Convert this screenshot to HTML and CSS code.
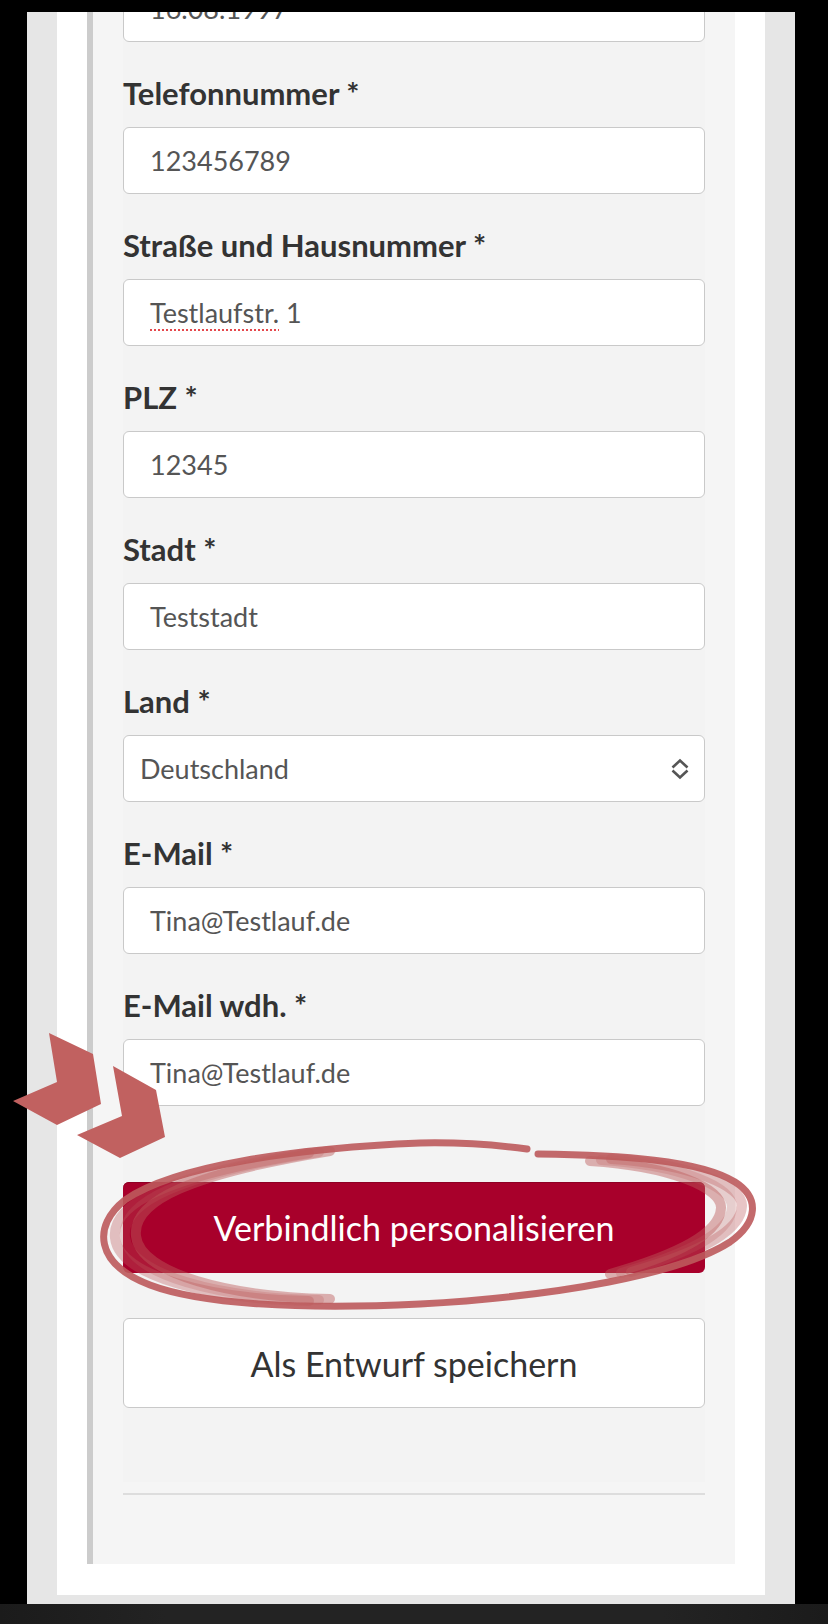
FILE: index.html
```html
<!DOCTYPE html>
<html lang="de">
<head>
    <meta charset="UTF-8">
    <title>Personalisierung</title>
    <link rel="stylesheet" href="styles.css">
</head>
<body>
    <div class="screen">
        <div class="column">
            <div class="card">
                <div class="panel">
                    <form class="form-box">
                        <div class="field field-first">
                            <div class="input">16.08.1997</div>
                        </div>
                        <div class="field">
                            <label class="field-label">Telefonnummer *</label>
                            <div class="input">123456789</div>
                        </div>
                        <div class="field">
                            <label class="field-label">Straße und Hausnummer *</label>
                            <div class="input"><span class="spell">Testlaufstr.</span> 1</div>
                        </div>
                        <div class="field">
                            <label class="field-label">PLZ *</label>
                            <div class="input">12345</div>
                        </div>
                        <div class="field">
                            <label class="field-label">Stadt *</label>
                            <div class="input">Teststadt</div>
                        </div>
                        <div class="field">
                            <label class="field-label">Land *</label>
                            <div class="input select">
                                <span>Deutschland</span>
                                <svg class="select-arrows" width="18" height="22" viewBox="0 0 18 22">
                                    <polyline points="1.5,9.5 9,2.5 16.5,9.5" />
                                    <polyline points="1.5,12.5 9,19.5 16.5,12.5" />
                                </svg>
                            </div>
                        </div>
                        <div class="field">
                            <label class="field-label">E-Mail *</label>
                            <div class="input">Tina@Testlauf.de</div>
                        </div>
                        <div class="field">
                            <label class="field-label">E-Mail wdh. *</label>
                            <div class="input">Tina@Testlauf.de</div>
                        </div>

                        <div class="actions">
                            <button type="button" class="btn btn-primary">Verbindlich personalisieren</button>
                            <button type="button" class="btn btn-secondary">Als Entwurf speichern</button>
                        </div>
                    </form>
                    <hr class="divider">
                </div>
            </div>
        </div>
        <div class="bottom-bar"></div>
    </div>

    <!-- hand drawn markers on top of the screenshot -->
    <svg class="annotations" width="828" height="1624" viewBox="0 0 828 1624">
        <g class="arrows">
            <polygon points="49,1033 93,1054 101,1104 57,1125 13,1101 57,1082" />
            <polygon points="113,1066 156,1090 165,1137 120,1158 77,1135 122,1116" />
        </g>
        <g class="circle">
            <path class="stroke-main" d="M538,1154 C620,1155 700,1160 735,1182 C760,1198 758,1222 730,1242 C680,1274 560,1296 420,1304 C300,1310 200,1304 150,1285 C95,1264 92,1226 125,1200 C175,1165 300,1148 420,1143 C470,1142 505,1146 527,1149" />
            <path class="brush brush-a" transform="translate(9,-2)" d="M300,1303 C200,1301 110,1278 106,1240 C102,1205 160,1178 300,1155" />
            <path class="brush brush-b" transform="translate(19,-3)" d="M300,1303 C200,1301 110,1278 106,1240 C102,1205 160,1178 300,1155" />
            <path class="brush brush-c" transform="translate(30,-4)" d="M300,1303 C200,1301 110,1278 106,1240 C102,1205 160,1178 300,1155" />
            <path class="brush brush-a" transform="translate(-9,1)" d="M620,1158 C700,1163 752,1185 751,1205 C750,1227 720,1248 640,1271" />
            <path class="brush brush-b" transform="translate(-19,2)" d="M620,1158 C700,1163 752,1185 751,1205 C750,1227 720,1248 640,1271" />
            <path class="brush brush-c" transform="translate(-30,3)" d="M620,1158 C700,1163 752,1185 751,1205 C750,1227 720,1248 640,1271" />
        </g>
    </svg>
</body>
</html>
```

FILE: styles.css
```css
body {
    margin: 0;
    background-color: #000;
    font-family: 'Lato', 'Open Sans', sans-serif;
    position: relative;
}
.screen {
    padding-top: 12px;
}
.column {
    margin: 0 33px 0 27px;
    padding: 0 30px 9px;
    background-color: #e6e6e6;
    overflow: hidden;
}
.card {
    background-color: #fff;
    padding: 0 30px 31px;
}
.panel {
    background-color: #f5f5f5;
    border-left: 6px solid #ccc;
    padding: 0 30px 69px;
}
.form-box {
    background-color: #f3f3f3;
    padding-bottom: 74px;
    margin: 0;
}
.field {
    margin-bottom: 33px;
}
.field-first {
    margin-top: -37px;
}
.field-label {
    display: block;
    font-size: 31px;
    font-weight: bold;
    line-height: 36px;
    color: #333;
    margin-bottom: 16px;
}
.input {
    box-sizing: border-box;
    height: 67px;
    background-color: #fff;
    border: 1px solid #c9c9c9;
    border-radius: 6px;
    padding: 0 26px;
    font-size: 27px;
    line-height: 66px;
    color: #555;
}
.spell {
    text-decoration: underline dotted #e5484d;
    text-decoration-thickness: 2px;
    text-underline-offset: 6px;
}
.select {
    display: flex;
    justify-content: space-between;
    align-items: center;
    padding: 0 15px 0 16px;
}
.select-arrows polyline {
    fill: none;
    stroke: #555;
    stroke-width: 2.6;
}
.actions {
    padding-top: 43px;
}
.btn {
    display: block;
    width: 100%;
    box-sizing: border-box;
    border-radius: 6px;
    font-family: 'Lato', 'Open Sans', sans-serif;
    font-size: 34px;
    cursor: pointer;
}
.btn-primary {
    height: 91px;
    border: none;
    background-color: #a8002b;
    box-shadow: inset 0 1px 0 #8e0024;
    color: #fff;
    margin-bottom: 45px;
}
.btn-secondary {
    height: 90px;
    border: 1px solid #c9c9c9;
    background-color: #fff;
    color: #333;
}
.divider {
    border: none;
    height: 2px;
    background-color: #ddd;
    margin: 11px 0 0;
}
.bottom-bar {
    height: 20px;
    background: linear-gradient(to right, #1b1b1b, #232323 20%, #232323 80%, #1b1b1b);
}
.annotations {
    position: absolute;
    top: 0;
    left: 0;
    pointer-events: none;
}
.arrows polygon {
    fill: #c16160;
}
.circle path {
    fill: none;
    stroke: #bd5a5c;
    stroke-linecap: round;
}
.stroke-main {
    stroke-width: 7;
    opacity: 0.9;
}
.brush {
    stroke-width: 10;
}
.brush-a {
    opacity: 0.35;
}
.brush-b {
    opacity: 0.25;
}
.brush-c {
    opacity: 0.45;
}
```
